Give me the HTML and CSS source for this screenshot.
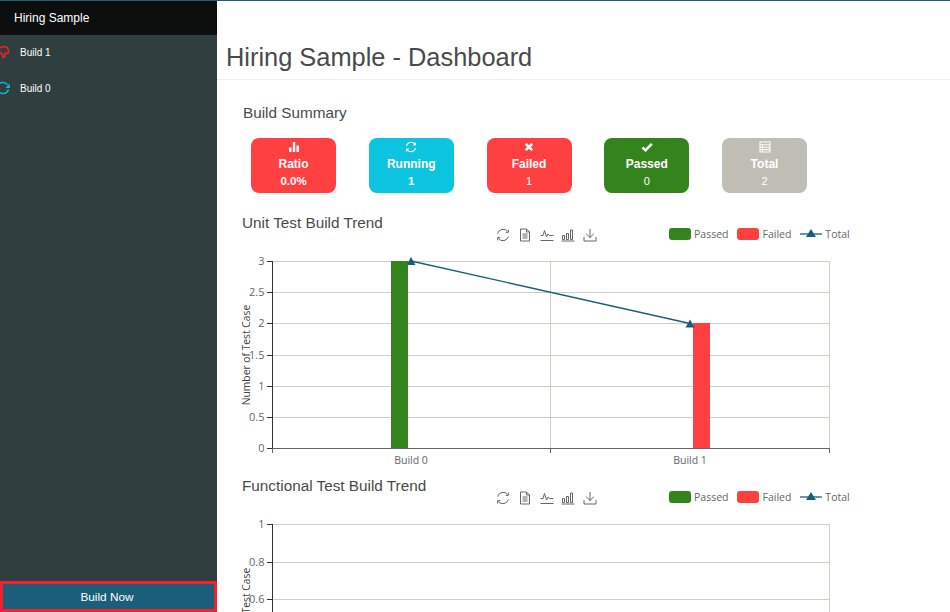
FILE: index.html
```html
<!DOCTYPE html>
<html lang="en">
<head>
<meta charset="utf-8">
<title>Hiring Sample - Dashboard</title>
<link rel="stylesheet" href="styles.css">
</head>
<body>
<svg class="defs" width="0" height="0" aria-hidden="true">
  <defs>
    <symbol id="t-refresh" viewBox="0 0 14 14"><path d="M1.6 5.6A5.6 5.6 0 0 1 11.6 3.6M12.4 8.4A5.6 5.6 0 0 1 2.4 10.4"/><path d="M12.4 1.6V4.4H9.8M1.6 12.4V9.6H4.2"/></symbol>
    <symbol id="t-doc" viewBox="0 0 14 14"><path d="M2.5 1H8.5L11.5 4V13H2.5ZM8.5 1V4H11.5M4.5 6H9.5M4.5 8H9.5M4.5 10H9.5"/></symbol>
    <symbol id="t-line" viewBox="0 0 14 14"><path d="M0.5 7.5H3L4.5 2.5L6.5 9L8 6L9.5 7.5H13.5M0.5 12.5H13.5"/></symbol>
    <symbol id="t-bar" viewBox="0 0 14 14"><path d="M1.5 7.5H3.5V11.5H1.5ZM5.5 5.5H7.5V11.5H5.5ZM9.5 2H11.5V11.5H9.5ZM0.5 13H13.5"/></symbol>
    <symbol id="t-save" viewBox="0 0 14 14"><path d="M7 1V9.5M3.2 5.8L7 9.5L10.8 5.8M1 9V13H13V9"/></symbol>
  </defs>
</svg>
<div class="app">
  <aside class="sidebar">
    <div class="brand">Hiring Sample</div>
    <nav class="builds">
      <a class="build">
        <svg class="build-icon" viewBox="0 0 14 14"><path class="ic-fail" d="M1 2.5H4.5C6 1.5 9 1.5 10 2C11.5 2.5 12.5 5 12.5 7.2C12.5 8.2 11.5 8.5 10 8.5H8.5C9 10 9 12.5 7.5 12.5C6.5 12.5 6.8 10.5 6 9.5C5.5 8.7 4.8 8.2 4.5 7.6H1Z"/></svg>
        <span>Build 1</span>
      </a>
      <a class="build">
        <svg class="build-icon" viewBox="0 0 14 14"><path class="ic-run" d="M1.5 5.5A5.7 5.7 0 0 1 11.5 3.8M12.5 8.5A5.7 5.7 0 0 1 2.5 10.2"/><path class="ic-run-fill" d="M14 7L9.4 7L13.6 2.6ZM0 7L4.600 7L0.400 11.400Z"/></svg>
        <span>Build 0</span>
      </a>
    </nav>
    <button class="build-now">Build Now</button>
  </aside>
  <main class="main">
    <h1 class="page-title">Hiring Sample - Dashboard</h1>
    <h2 class="summary-title">Build Summary</h2>
    <section class="cards">
      <div class="card red">
        <svg class="card-icon" viewBox="0 0 12 12"><path class="fill" d="M1 6.5H3.5V11H1ZM4.8 1H7.2V11H4.8ZM8.5 4.5H11V11H8.5Z"/></svg>
        <b>Ratio</b><b class="val">0.0%</b>
      </div>
      <div class="card cyan">
        <svg class="card-icon" viewBox="0 0 12 12"><path class="line" d="M1.5 5A4.6 4.6 0 0 1 9.6 3M10.5 7A4.6 4.6 0 0 1 2.4 9"/><path class="fill" d="M11 1V4.6H7.6ZM1 11V7.4H4.4Z"/></svg>
        <b>Running</b><b class="val">1</b>
      </div>
      <div class="card red">
        <svg class="card-icon" viewBox="0 0 12 12"><path class="x" d="M2.8 2.8L9.2 9.2M9.2 2.8L2.8 9.2"/></svg>
        <b>Failed</b><span class="val">1</span>
      </div>
      <div class="card green">
        <svg class="card-icon" viewBox="0 0 12 12"><path class="x" d="M1.5 6.5L4.5 9.3L10.8 2.8"/></svg>
        <b>Passed</b><span class="val">0</span>
      </div>
      <div class="card grey">
        <svg class="card-icon" viewBox="0 0 12 12"><path class="line" d="M1 1H11V11H1ZM1 3.8H11M3.5 3.8V11M1 6.2H11M1 8.6H11"/></svg>
        <b>Total</b><span class="val">2</span>
      </div>
    </section>

    <section class="chart">
      <header class="chart-head">
        <h3 class="chart-title">Unit Test Build Trend</h3>
        <div class="tools">
          <svg class="tool"><use href="#t-refresh"/></svg>
          <svg class="tool"><use href="#t-doc"/></svg>
          <svg class="tool"><use href="#t-line"/></svg>
          <svg class="tool"><use href="#t-bar"/></svg>
          <svg class="tool"><use href="#t-save"/></svg>
        </div>
        <div class="legend">
          <span class="swatch s-green"></span><span class="leg-text t-pass">Passed</span>
          <span class="swatch s-red"></span><span class="leg-text t-fail">Failed</span>
          <svg class="leg-line" viewBox="0 0 22 12"><path class="series" d="M0 6H22"/><path class="marker" d="M11 1L16 9H6Z"/></svg><span class="leg-text">Total</span>
        </div>
      </header>
      <svg class="plot" viewBox="0 0 715 231">
        <path class="grid" d="M37 16.500H594.500V203M37 47.500H594.500M37 78.500H594.500M37 110.500H594.500M37 141.500H594.500M37 172.500H594.500M315.500 16V203"/>
        <rect class="bar-green" x="156" y="16" width="17" height="187"/>
        <rect class="bar-red" x="458" y="78" width="17" height="125"/>
        <path class="axis-y" d="M37.500 16V203M32 16.500H37M32 47.500H37M32 78.500H37M32 110.500H37M32 141.500H37M32 172.500H37M32 203.500H37"/>
        <path class="axis-x" d="M37 203.500H595M37.500 203V208M315.500 203V208M594.500 203V208"/>
        <path class="series" d="M176 16L455 78.500"/>
        <path class="marker" d="M176 12L180.500 20H171.500Z"/>
        <path class="marker" d="M455 74.500L459.500 82.500H450.500Z"/>
        <g class="ticks">
          <text x="29.500" y="20">3</text><text x="29.500" y="51">2.5</text><text x="29.500" y="82">2</text><text x="29.500" y="114">1.5</text><text x="29.500" y="145">1</text><text x="29.500" y="176">0.5</text><text x="29.500" y="207">0</text>
        </g>
        <text class="cat" x="176" y="219">Build 0</text>
        <text class="cat" x="455" y="219">Build 1</text>
        <text class="y-name" transform="translate(14.500 110) rotate(-90)">Number of Test Case</text>
      </svg>
    </section>

    <section class="chart">
      <header class="chart-head">
        <h3 class="chart-title">Functional Test Build Trend</h3>
        <div class="tools">
          <svg class="tool"><use href="#t-refresh"/></svg>
          <svg class="tool"><use href="#t-doc"/></svg>
          <svg class="tool"><use href="#t-line"/></svg>
          <svg class="tool"><use href="#t-bar"/></svg>
          <svg class="tool"><use href="#t-save"/></svg>
        </div>
        <div class="legend">
          <span class="swatch s-green"></span><span class="leg-text t-pass">Passed</span>
          <span class="swatch s-red"></span><span class="leg-text t-fail">Failed</span>
          <svg class="leg-line" viewBox="0 0 22 12"><path class="series" d="M0 6H22"/><path class="marker" d="M11 1L16 9H6Z"/></svg><span class="leg-text">Total</span>
        </div>
      </header>
      <svg class="plot" viewBox="0 0 715 231">
        <path class="grid" d="M37 16.500H594.500V203M37 54.500H594.500M37 91.500H594.500M37 128.500H594.500M37 166.500H594.500"/>
        <path class="axis-y" d="M37.500 16V203M32 16.500H37M32 54.500H37M32 91.500H37M32 128.500H37M32 166.500H37M32 203.500H37"/>
        <path class="axis-x" d="M37 203.500H595"/>
        <g class="ticks">
          <text x="29.500" y="20">1</text><text x="29.500" y="58">0.8</text><text x="29.500" y="95">0.6</text><text x="29.500" y="132">0.4</text><text x="29.500" y="170">0.2</text><text x="29.500" y="207">0</text>
        </g>
        <text class="y-name" transform="translate(14.500 110) rotate(-90)">Number of Test Case</text>
      </svg>
    </section>
  </main>
</div>
</body>
</html>
```
FILE: styles.css
```css
* { box-sizing: border-box; }
html, body { margin: 0; height: 612px; overflow: hidden; background: #fff; }
body { font-family: "Liberation Sans", Arial, sans-serif; color: #444; }
.defs { display: block; height: 0; }

.app {
  display: flex;
  height: 612px;
  border-top: 1px solid #1b5e7b;
}

.sidebar {
  flex: 0 0 217px;
  display: flex;
  flex-direction: column;
  height: 611px;
  background: #2f3e3e;
}
.brand {
  height: 34px;
  line-height: 34px;
  padding-left: 14px;
  background: #0d0f0f;
  color: #fff;
  font-size: 12px;
}
.builds { flex: 1; display: flex; flex-direction: column; margin-top: -1px; }
.build {
  display: flex;
  align-items: center;
  height: 36px;
  color: #fff;
  font-size: 10px;
}
.build-icon { width: 14px; height: 14px; margin-left: -4px; margin-right: 10px; overflow: visible; }
.ic-fail { fill: none; stroke: #f5202c; stroke-width: 1.600; }
.ic-run { fill: none; stroke: #11b8d4; stroke-width: 1.500; }
.ic-run-fill { fill: #11b8d4; }

.build-now {
  height: 31px;
  border: 3px solid #f5202c;
  background: #1b5e7b;
  color: #fff;
  font: 11.800px "Liberation Sans", Arial, sans-serif;
  padding: 0 3px 0 0;
}

.main { flex: 1; min-width: 0; overflow: hidden; }
.page-title {
  height: 47px;
  margin: 32px 0 0;
  padding-left: 9px;
  border-bottom: 1px solid #eee;
  font-size: 25.400px;
  font-weight: 400;
  line-height: 48px;
  color: #4a4a4a;
}
.summary-title {
  height: 18px;
  margin: 24px 0 0 26px;
  font-size: 15.300px;
  font-weight: 400;
  line-height: 18px;
  color: #4a4a4a;
}

.cards { display: flex; gap: 32.750px; margin: 16px 0 20px 34px; }
.card {
  flex: 0 0 85px;
  height: 55px;
  display: flex;
  flex-direction: column;
  align-items: center;
  border-radius: 8px;
  padding-top: 3px;
  color: #fff;
  font-size: 12px;
}
.card b { font-weight: 700; line-height: 17px; }
.card b:first-of-type { margin-top: 3px; font-size: 12px; }
.card .val { font-size: 11.500px; line-height: 17px; }
.card span.val { font-size: 11px; }
.card-icon { width: 12px; height: 12px; }
.card-icon .fill { fill: #fff; }
.card-icon .line { fill: none; stroke: #fff; stroke-width: 1.100; }
.card-icon .x { fill: none; stroke: #fff; stroke-width: 2.600; }
.red { background: #ff4040; }
.cyan { background: #0cc4e0; }
.green { background: #33841c; }
.grey { background: #c0bdb5; }

.chart { height: 263px; }
.chart-head { display: flex; height: 32px; padding-left: 25px; }
.chart-title {
  flex: 0 0 254px;
  margin: 0;
  font-size: 15.300px;
  font-weight: 400;
  line-height: 20px;
  color: #4a4a4a;
}
.tools { display: flex; gap: 7.750px; padding-top: 15px; width: 173px; }
.tool { width: 14px; height: 14px; fill: none; stroke: #666; stroke-width: 1; }
.legend { display: flex; align-items: flex-start; padding-top: 14px; }
.swatch { width: 22px; height: 12px; border-radius: 3px; margin-top: 1px; }
.s-green { background: #33841c; }
.s-red { background: #ff4040; }
.leg-text { font: 10.500px "Open Sans", sans-serif; line-height: 14px; color: #666; margin-left: 3px; }
.t-pass { margin-right: 9px; }
.t-fail { margin-right: 9px; }
.leg-line { width: 22px; height: 12px; margin-top: 1px; }

.plot { display: block; width: 715px; height: 231px; margin-left: 18px; }
.grid { fill: none; stroke: #cfcdc6; stroke-width: 1; }
.axis-y { fill: none; stroke: #333; stroke-width: 1; }
.axis-x { fill: none; stroke: #666; stroke-width: 1; }
.bar-green { fill: #33841c; }
.bar-red { fill: #ff4040; }
.series { fill: none; stroke: #1b5e7b; stroke-width: 1.300; }
.marker { fill: #1b5e7b; }
.ticks text { font: 11px "Open Sans", sans-serif; fill: #666; text-anchor: end; }
.cat { font: 10.500px "Open Sans", sans-serif; fill: #666; text-anchor: middle; }
.y-name { font: 10.300px "Open Sans", sans-serif; fill: #444; text-anchor: middle; }
```
